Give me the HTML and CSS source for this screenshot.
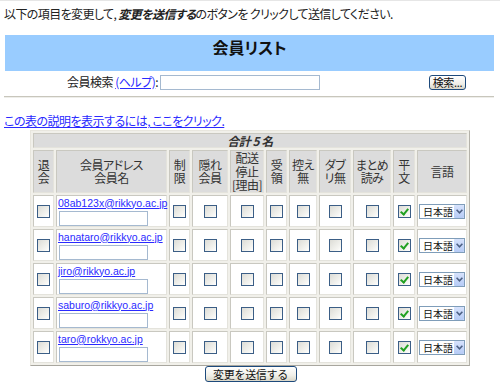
FILE: index.html
```html
<!DOCTYPE html>
<html lang="ja">

<head>
    <meta charset="UTF-8">
    <meta name="viewport" content="width=device-width, initial-scale=1.0">
    <title>会員リスト</title>
    <link rel="stylesheet" href="styles.css">
</head>

<body>
    <p class="intro">以下の項目を変更して, <b><i>変更を送信する</i></b>のボタンを クリックして送信してください.</p>

    <div class="banner">
        <h1>会員リスト</h1>
    </div>

    <form class="search">
        <label class="search-label">会員検索 <a href="#">(ヘルプ)</a>:</label>
        <input type="text" class="search-input">
        <button type="button" class="xp-btn search-btn">検索...</button>
    </form>

    <hr class="rule">

    <a href="#" class="help-link">この表の説明を表示するには, ここをクリック.</a>

    <form class="list">
        <table class="members">
            <colgroup>
                <col class="w21">
                <col class="w111">
                <col class="w21">
                <col class="w36">
                <col class="w34">
                <col class="w21">
                <col class="w28">
                <col class="w32">
                <col class="w38">
                <col class="w22">
                <col class="w50">
            </colgroup>
            <thead>
                <tr>
                    <th colspan="11" class="total"><i>合計 5 名</i></th>
                </tr>
                <tr class="heads">
                    <th>退<br>会</th>
                    <th>会員アドレス<br>会員名</th>
                    <th>制<br>限</th>
                    <th>隠れ<br>会員</th>
                    <th>配送<br>停止<br>[理由]</th>
                    <th>受<br>領</th>
                    <th>控え<br>無</th>
                    <th>ダブ<br>リ無</th>
                    <th>まとめ<br>読み</th>
                    <th>平<br>文</th>
                    <th>言語</th>
                </tr>
            </thead>
            <tbody class="rows"></tbody>
        </table>
        <div class="submit-row">
            <button type="button" class="xp-btn submit-btn">変更を送信する</button>
        </div>
    </form>

    <script>
        const rowsEl = document.querySelector('.rows')
        const members = [
            '08ab123x@rikkyo.ac.jp',
            'hanataro@rikkyo.ac.jp',
            'jiro@rikkyo.ac.jp',
            'saburo@rikkyo.ac.jp',
            'taro@rokkyo.ac.jp'
        ]

        const box = '<td class="mid"><input type="checkbox" class="cb"></td>'

        members.forEach((mail) => {
            const tr = document.createElement('tr')
            tr.innerHTML = `
                ${box}
                <td class="who">
                    <a href="#" class="mail">${mail}</a>
                    <input type="text" class="name-input">
                </td>
                ${box}${box}${box}${box}${box}${box}${box}
                <td class="mid"><input type="checkbox" class="cb" checked></td>
                <td class="mid">
                    <span class="select">
                        <select class="lang"><option>日本語</option></select>
                        <span class="arrow"><svg width="7" height="5" viewBox="0 0 7 5"><path d="M0.6 0.8 L3.5 3.8 L6.4 0.8" fill="none" stroke="#4d6185" stroke-width="1.6"/></svg></span>
                    </span>
                </td>
            `
            rowsEl.appendChild(tr)
        });
    </script>
</body>

</html>
```

FILE: styles.css
```css
* {
    margin: 0;
    padding: 0;
    box-sizing: border-box;
}

body {
    padding: 0 6px 0 4px;
    border-top: 1px solid #e6e6e6;
    font-family: "Noto Sans CJK JP", "Liberation Sans", sans-serif;
    font-size: 12px;
    line-height: 14px;
    letter-spacing: -0.5px;
    color: #222;
    font-feature-settings: "palt";
    background: #fff;
}

a {
    color: #2a2aff;
}

.intro {
    margin-top: 6px;
    letter-spacing: -0.6px;
}

.intro i {
    font-weight: 700;
}

/* 标题 */
.banner {
    margin: 14px 0 0 1px;
    width: 489px;
    height: 36px;
    padding-top: 2px;
    background-color: #99ccff;
    text-align: center;
}

.banner h1 {
    font-size: 16px;
    line-height: 20px;
    letter-spacing: 0;
    color: #111;
}

/* 搜索 */
.search {
    display: flex;
    align-items: center;
    height: 20px;
    margin-top: 1px;
}

.search-label {
    margin-left: 63px;
}

.search-input {
    width: 160px;
    height: 15px;
    margin-left: 2px;
    border: 1px solid #a5b9d0;
}

.search-btn {
    margin-left: auto;
    margin-right: 28px;
    width: 37px;
}

.xp-btn {
    height: 15px;
    border: 1px solid #1d4a7c;
    border-radius: 3px;
    background: linear-gradient(#ffffff, #f0efe8 60%, #d9d6c8);
    font-family: inherit;
    font-size: 11px;
    line-height: 12px;
    letter-spacing: -0.3px;
    color: #111;
}

.rule {
    margin: 4px 0 0 0;
    width: 490px;
    border: none;
    border-top: 1px solid #c8c6bc;
    border-bottom: 1px solid #eeeeea;
}

.help-link {
    display: inline-block;
    margin-top: 16px;
}

/* 表格 */
.list {
    width: 440px;
    margin: 2px 0 0 26px;
}

.members {
    width: 440px;
    table-layout: fixed;
    border-collapse: separate;
    border-spacing: 2px;
    border: 1px solid;
    border-color: #e8e6de #b4b2aa #a8a69e #e8e6de;
    background-color: #f1f0ea;
}

.w21 { width: 21px; }
.w111 { width: 111px; }
.w36 { width: 36px; }
.w34 { width: 34px; }
.w28 { width: 28px; }
.w32 { width: 32px; }
.w38 { width: 38px; }
.w22 { width: 22px; }
.w50 { width: 50px; }

.members th,
.members td {
    border: 1px solid;
    border-color: #c9c8c0 #e4e3dc #e4e3dc #c9c8c0;
    padding: 0;
}

.members th {
    background-color: #dcdcdc;
    font-weight: normal;
    text-align: center;
    vertical-align: middle;
    color: #333;
    overflow: hidden;
}

.members .total {
    height: 15px;
    font-weight: 700;
    line-height: 13px;
}

.heads th {
    height: 42px;
    line-height: 13.5px;
}

.members td {
    height: 32px;
    background-color: #fff;
}

.mid {
    text-align: center;
    vertical-align: middle;
}

.who {
    vertical-align: top;
    padding: 1px 0 0 1px !important;
}

.mail {
    display: block;
    font-family: "Liberation Sans", sans-serif;
    font-size: 10.5px;
    line-height: 13px;
    letter-spacing: 0;
    white-space: nowrap;
}

.name-input {
    display: block;
    width: 89px;
    height: 15px;
    margin: 1px 0 0 1px;
    border: 1px solid #a5b9d0;
}

/* 复选框 */
.cb {
    appearance: none;
    -webkit-appearance: none;
    display: inline-block;
    position: relative;
    width: 13px;
    height: 13px;
    margin-top: 1px;
    border: 1px solid #3b5e86;
    background: linear-gradient(135deg, #dcdcd6, #f4f4f0 70%, #fff);
    vertical-align: middle;
}

.cb:checked::after {
    content: "";
    position: absolute;
    left: 3px;
    top: 1px;
    width: 3px;
    height: 6px;
    border: solid #21a121;
    border-width: 0 2px 2px 0;
    transform: rotate(40deg);
}

/* 下拉 */
.select {
    position: relative;
    display: inline-block;
    width: 46px;
    height: 15px;
    vertical-align: middle;
}

.lang {
    appearance: none;
    -webkit-appearance: none;
    display: block;
    width: 46px;
    height: 15px;
    padding-left: 3px;
    border: 1px solid #7f9db9;
    background: #fff;
    font-family: inherit;
    font-size: 10px;
    line-height: 13px;
    letter-spacing: 0;
    color: #111;
}

.arrow {
    position: absolute;
    right: 1px;
    top: 1px;
    width: 10px;
    height: 13px;
    display: flex;
    align-items: center;
    justify-content: center;
    background: linear-gradient(#d6e2fc, #b6cbf6);
    border-radius: 1px;
}

.submit-row {
    text-align: center;
}

.submit-btn {
    width: 92px;
    height: 16px;
    margin-left: 1px;
}
```
